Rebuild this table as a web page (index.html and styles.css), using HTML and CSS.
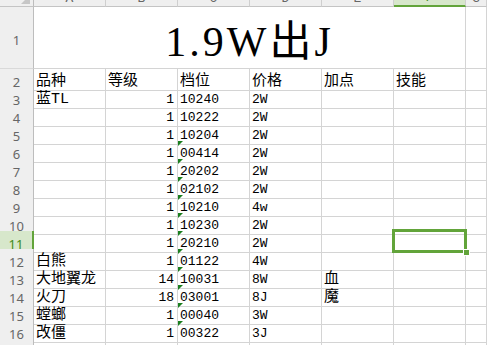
FILE: index.html
```html
<!DOCTYPE html>
<html lang="zh-CN">
<head>
  <meta charset="UTF-8">
  <title>Sheet1</title>
  <link rel="stylesheet" href="styles.css">
</head>
<body>
<div class="sheet">

  <div class="row head">
    <div class="corner"><span class="all"></span></div>
    <div class="ch">A</div><div class="ch">B</div><div class="ch">C</div>
    <div class="ch">D</div><div class="ch">E</div><div class="ch on">F</div><div class="ch">G</div>
  </div>

  <div class="row title-row">
    <div class="rh">1</div>
    <div class="title">1.9W出J</div>
    <div></div>
  </div>

  <div class="row">
    <div class="rh">2</div>
    <div class="cell txt">品种</div><div class="cell txt">等级</div><div class="cell txt">档位</div>
    <div class="cell txt">价格</div><div class="cell txt">加点</div><div class="cell txt">技能</div><div></div>
  </div>

  <div class="row">
    <div class="rh">3</div>
    <div class="cell txt">蓝TL</div><div class="cell num">1</div><div class="cell">10240</div>
    <div class="cell">2W</div><div></div><div></div><div></div>
  </div>
  <div class="row">
    <div class="rh">4</div>
    <div></div><div class="cell num">1</div><div class="cell">10222</div>
    <div class="cell">2W</div><div></div><div></div><div></div>
  </div>
  <div class="row">
    <div class="rh">5</div>
    <div></div><div class="cell num">1</div><div class="cell">10204</div>
    <div class="cell">2W</div><div></div><div></div><div></div>
  </div>
  <div class="row">
    <div class="rh">6</div>
    <div></div><div class="cell num">1</div><div class="cell flag">00414</div>
    <div class="cell">2W</div><div></div><div></div><div></div>
  </div>
  <div class="row">
    <div class="rh">7</div>
    <div></div><div class="cell num">1</div><div class="cell flag">20202</div>
    <div class="cell">2W</div><div></div><div></div><div></div>
  </div>
  <div class="row">
    <div class="rh">8</div>
    <div></div><div class="cell num">1</div><div class="cell flag">02102</div>
    <div class="cell">2W</div><div></div><div></div><div></div>
  </div>
  <div class="row">
    <div class="rh">9</div>
    <div></div><div class="cell num">1</div><div class="cell flag">10210</div>
    <div class="cell">4w</div><div></div><div></div><div></div>
  </div>
  <div class="row">
    <div class="rh">10</div>
    <div></div><div class="cell num">1</div><div class="cell flag">10230</div>
    <div class="cell">2W</div><div></div><div></div><div></div>
  </div>
  <div class="row">
    <div class="rh on">11</div>
    <div></div><div class="cell num">1</div><div class="cell flag">20210</div>
    <div class="cell">2W</div><div></div><div class="sel"><span class="handle"></span></div><div></div>
  </div>
  <div class="row">
    <div class="rh">12</div>
    <div class="cell txt">白熊</div><div class="cell num">1</div><div class="cell flag">01122</div>
    <div class="cell">4W</div><div></div><div></div><div></div>
  </div>
  <div class="row">
    <div class="rh">13</div>
    <div class="cell txt">大地翼龙</div><div class="cell num">14</div><div class="cell flag">10031</div>
    <div class="cell">8W</div><div class="cell txt">血</div><div></div><div></div>
  </div>
  <div class="row">
    <div class="rh">14</div>
    <div class="cell txt">火刀</div><div class="cell num">18</div><div class="cell flag">03001</div>
    <div class="cell">8J</div><div class="cell txt">魔</div><div></div><div></div>
  </div>
  <div class="row">
    <div class="rh">15</div>
    <div class="cell txt">螳螂</div><div class="cell num">1</div><div class="cell flag">00040</div>
    <div class="cell">3W</div><div></div><div></div><div></div>
  </div>
  <div class="row">
    <div class="rh">16</div>
    <div class="cell txt">改僵</div><div class="cell num">1</div><div class="cell flag">00322</div>
    <div class="cell">3J</div><div></div><div></div><div></div>
  </div>
  <div class="row">
    <div class="rh">17</div>
    <div></div><div></div><div></div><div></div><div></div><div></div><div></div>
  </div>

</div>
</body>
</html>
```

FILE: styles.css
```css
body {
    margin: 0;
    overflow: hidden;
    background: #fff;
    font-family: "Liberation Mono", "Noto Sans CJK SC", monospace;
}

/* the sheet is scrolled a little, so the column letters are cut off */
.sheet { margin-top: -13px; }

.row {
    display: grid;
    grid-template-columns: 34px repeat(6, 72px) 1fr;
    height: 18px;
}
.row > div {
    box-sizing: border-box;
    border-right: 1px solid #d4d4d4;
    border-bottom: 1px solid #d4d4d4;
    min-width: 0;
}

/* headers */
.head { height: 20px; }
.head > div {
    background: #efefef;
    border-bottom-color: #c4c4c4;
    border-right-color: #cfcfcf;
}
.corner { position: relative; border-right-color: #bdbdbd !important; }
.corner .all {
    position: absolute;
    right: 3px;
    bottom: 2px;
    width: 0;
    height: 0;
    border-left: 9px solid transparent;
    border-bottom: 9px solid #c6c6c6;
}
.ch {
    display: flex;
    align-items: flex-end;
    justify-content: center;
    font-size: 13px;
    line-height: 14px;
    color: #666;
}
.ch.on {
    background: #d7e7cb !important;
    color: #3f8a18;
    border-bottom: 2px solid #62a43a !important;
}

.rh {
    display: flex;
    align-items: center;
    justify-content: center;
    padding-top: 5px;
    background: #efefef;
    border-right-color: #bdbdbd !important;
    border-bottom-color: #d9d9d9 !important;
    font-family: "Noto Sans", sans-serif;
    font-size: 13px;
    line-height: 16px;
    color: #666;
}
.rh.on {
    background: #d7e7cb;
    color: #3f8a18;
    border-right: 2px solid #62a43a !important;
}

/* merged title A1:F1 */
.title-row { height: 62px; }
.title {
    grid-column: 2 / 8;
    display: flex;
    align-items: center;
    justify-content: center;
    padding-top: 8px;
    font-family: "Liberation Serif", "Noto Sans CJK SC", serif;
    font-size: 42px;
    line-height: 42px;
    letter-spacing: 3px;
    color: #000;
}

/* data cells */
.cell {
    display: flex;
    align-items: center;
    padding: 5px 2px 0;
    font-size: 13px;
    line-height: 16px;
    white-space: nowrap;
    color: #000;
}
.cell.txt { font-size: 15px; }
.cell.num { justify-content: flex-end; padding-right: 3px; }

/* numbers stored as text */
.cell.flag { position: relative; }
.cell.flag::before {
    content: "";
    position: absolute;
    left: 0;
    top: 0;
    border-top: 5px solid #1a7f1f;
    border-right: 5px solid transparent;
}

/* active cell F11 */
.sel { position: relative; }
.sel::before {
    content: "";
    position: absolute;
    left: -2px;
    top: -2px;
    right: -2px;
    bottom: -1px;
    border: 3px solid #62a43a;
}
.sel .handle {
    position: absolute;
    right: -5px;
    bottom: -4px;
    width: 5px;
    height: 5px;
    background: #62a43a;
    border: 1px solid #fff;
}
```
